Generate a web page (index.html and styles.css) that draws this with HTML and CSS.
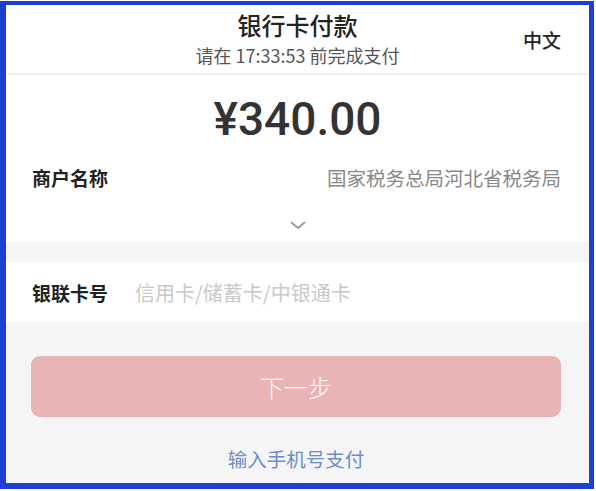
FILE: index.html
```html
<!DOCTYPE html>
<html lang="zh-CN">
<head>
  <meta charset="UTF-8">
  <meta name="viewport" content="width=device-width, initial-scale=1.0">
  <title>银行卡付款</title>
  <link rel="stylesheet" href="styles.css">
</head>
<body>
  <div class="frame">
    <!-- Header -->
    <div class="header">
      <div></div>
      <div class="header-center">
        <h1>银行卡付款</h1>
        <p class="deadline">请在 17:33:53 前完成支付</p>
      </div>
      <div class="lang">中文</div>
    </div>

    <!-- Order summary -->
    <div class="summary">
      <div class="amount">¥340.00</div>
      <div class="row">
        <span class="label">商户名称</span>
        <span class="value">国家税务总局河北省税务局</span>
      </div>
      <div class="more">
        <svg width="16" height="9" viewBox="0 0 16 9"><path d="M1.5 1.5 L8 7 L14.5 1.5" fill="none" stroke="#9a9a9a" stroke-width="1.8" stroke-linecap="round" stroke-linejoin="round"/></svg>
      </div>
    </div>

    <!-- Card number -->
    <div class="card-row">
      <label for="card" class="label">银联卡号</label>
      <input type="text" id="card" placeholder="信用卡/储蓄卡/中银通卡">
    </div>

    <div class="actions">
      <button id="nextBtn" disabled>下一步</button>
      <a href="#" class="phone-link">输入手机号支付</a>
    </div>
  </div>
</body>
</html>
```

FILE: styles.css
```css
body {
  margin: 0;
  background: #fff;
  font-family: "Noto Sans CJK SC", "Noto Sans", sans-serif;
}
.frame {
  margin: 1px 2px 2px 0;
  height: 478px;
  border-style: solid;
  border-color: #1d3fd6;
  border-width: 4px 5px 6px 6px;
  background: #f5f5f5;
  display: flex;
  flex-direction: column;
  overflow: hidden;
}
.header {
  background: #fff;
  height: 68px;
  display: grid;
  grid-template-columns: 1fr auto 1fr;
  align-items: center;
  border-bottom: 2px solid #f0f0f0;
}
.header-center {
  text-align: center;
  margin-top: 1px;
}
h1 {
  margin: 0 0 3px;
  font-size: 24px;
  font-weight: 500;
  line-height: 28px;
  color: #222;
}
.deadline {
  margin: 0;
  font-size: 18px;
  line-height: 26px;
  color: #555;
}
.lang {
  justify-self: end;
  margin-right: 28px;
  font-size: 19px;
  font-weight: 500;
  color: #222;
}
.summary {
  background: #fff;
  height: 167px;
  display: flex;
  flex-direction: column;
}
.amount {
  text-align: center;
  font-family: Roboto, "Noto Sans", sans-serif;
  font-size: 46px;
  font-weight: 500;
  color: #333;
  line-height: 56px;
  margin-top: 16px;
}
.row {
  display: flex;
  justify-content: space-between;
  align-items: center;
  padding: 0 28px 0 26px;
  margin-top: 17px;
  line-height: 28px;
}
.label {
  font-size: 19px;
  font-weight: 700;
  color: #222;
}
.value {
  font-size: 19.5px;
  color: #888;
}
.more {
  text-align: center;
  margin-top: 27px;
  line-height: 9px;
}
.card-row {
  margin-top: 20px;
  background: #fff;
  height: 60px;
  display: flex;
  align-items: center;
  padding-left: 26px;
  gap: 27px;
}
.card-row input {
  border: none;
  outline: none;
  flex: 1;
  font-family: "Noto Sans CJK SC", sans-serif;
  font-size: 20px;
  background: transparent;
  padding: 0;
}
.card-row input::placeholder {
  color: #c9c9c9;
}
.actions {
  display: flex;
  flex-direction: column;
  align-items: center;
  padding: 34px 28px 0 25px;
}
button {
  width: 100%;
  height: 61px;
  border: none;
  border-radius: 9px;
  background: #e8b4b6;
  color: #fff;
  font-family: "Noto Sans CJK SC", sans-serif;
  font-size: 24px;
  font-weight: 300;
}
.phone-link {
  margin-top: 27px;
  font-size: 19.5px;
  color: #6a8fc6;
  text-decoration: none;
}
```
